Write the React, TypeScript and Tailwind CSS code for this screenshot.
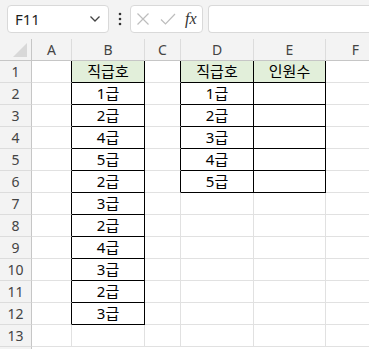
import React from "react";

const cols = ["A", "B", "C", "D", "E", "F"];
const colW = ["w-[40px]", "w-[73px]", "w-[36px]", "w-[73px]", "w-[72px]", "w-[60px]"];

const colB = ["직급호", "1급", "2급", "4급", "5급", "2급", "3급", "2급", "4급", "3급", "2급", "3급"];
const colD = ["직급호", "1급", "2급", "3급", "4급", "5급"];

function cellInfo(row: number, col: number) {
  // row: 1-based, col: 0..5 (A..F)
  let text = "";
  let fill = false;
  let rightBlack = false;
  let bottomBlack = false;
  if (col === 0 && row <= 12) rightBlack = true;
  if (col === 1 && row <= 12) {
    text = colB[row - 1];
    fill = row === 1;
    rightBlack = true;
    bottomBlack = true;
  }
  if (col === 2 && row <= 6) rightBlack = true;
  if (col === 3 && row <= 6) {
    text = colD[row - 1];
    fill = row === 1;
    rightBlack = true;
    bottomBlack = true;
  }
  if (col === 4 && row <= 6) {
    text = row === 1 ? "인원수" : "";
    fill = row === 1;
    rightBlack = true;
    bottomBlack = true;
  }
  return { text, fill, rightBlack, bottomBlack };
}

function Toolbar() {
  return (
    <div className="flex h-[39px] items-start gap-0 bg-[#f3f3f3] pt-[5px] pl-[7px]">
      <div className="flex h-[28px] w-[102px] items-center justify-between rounded-[4px] border border-[#d9d9d9] bg-white pl-[7px] pr-[7px]">
        <span className="text-[15px] text-[#1f1f1f]">F11</span>
        <svg width="12" height="8" viewBox="0 0 12 8">
          <path d="M1.5 1.5 L6 6 L10.5 1.5" fill="none" stroke="#444" strokeWidth="1.3" />
        </svg>
      </div>
      <div className="flex h-[28px] w-[21px] items-center justify-center">
        <svg width="4" height="14" viewBox="0 0 4 14">
          <circle cx="2" cy="2" r="1.3" fill="#333" />
          <circle cx="2" cy="7" r="1.3" fill="#333" />
          <circle cx="2" cy="12" r="1.3" fill="#333" />
        </svg>
      </div>
      <div className="flex h-[28px] w-[73px] items-center rounded-[4px] border border-[#d9d9d9] bg-white pl-[5px]">
        <svg width="14" height="14" viewBox="0 0 14 14" className="mr-[10px]">
          <path d="M1.5 1.5 L12.5 12.5 M12.5 1.5 L1.5 12.5" stroke="#bdbdbd" strokeWidth="1.2" />
        </svg>
        <svg width="16" height="14" viewBox="0 0 16 14" className="mr-[9px]">
          <path d="M1 7.5 L5.5 12 L15 2" fill="none" stroke="#bdbdbd" strokeWidth="1.2" />
        </svg>
        <span className="text-[16px] italic text-[#333]" style={{ fontFamily: '"Liberation Serif", serif' }}>
          fx
        </span>
      </div>
      <div className="ml-[5px] h-[28px] flex-1 rounded-l-[4px] border border-r-0 border-[#d9d9d9] bg-white" />
    </div>
  );
}

function HeaderRow() {
  return (
    <div className="flex h-[22px] bg-[#f3f3f3]">
      <div className="relative h-[22px] w-[32px] shrink-0 border-r border-b border-[#c6c6c6]">
        <svg width="14" height="14" viewBox="0 0 14 14" className="absolute right-[4px] bottom-[3px]">
          <path d="M14 0 L14 14 L0 14 Z" fill="#d8d8d8" />
        </svg>
      </div>
      {cols.map((c, i) => (
        <div
          key={c}
          className={`${colW[i]} flex h-[22px] shrink-0 items-center justify-center border-r border-b border-r-[#dcdcdc] border-b-[#c6c6c6] text-[14px] text-[#444]`}
        >
          {c}
        </div>
      ))}
    </div>
  );
}

function Row({ row }: { row: number }) {
  return (
    <div className="flex h-[22px]">
      <div className="flex h-[22px] w-[32px] shrink-0 items-center justify-center border-r border-b border-r-[#c6c6c6] border-b-[#dcdcdc] bg-[#f3f3f3] text-[14px] text-[#444]">
        {row}
      </div>
      {cols.map((c, i) => {
        const info = cellInfo(row, i);
        return (
          <div
            key={c}
            className={`${colW[i]} flex h-[22px] shrink-0 items-center justify-center border-r border-b text-[15px] text-black ${
              info.rightBlack ? "border-r-black" : "border-r-[#e1e1e1]"
            } ${info.bottomBlack ? "border-b-black" : "border-b-[#e1e1e1]"} ${
              info.fill ? "bg-[#e2efda]" : "bg-white"
            }`}
          >
            {info.text}
          </div>
        );
      })}
    </div>
  );
}

export default function App() {
  const rows = Array.from({ length: 13 }, (_, i) => i + 1);
  return (
    <div
      className="h-[349px] w-[369px] overflow-hidden bg-white"
      style={{ fontFamily: '"Noto Sans", "Noto Sans CJK KR", sans-serif' }}
    >
      <Toolbar />
      <HeaderRow />
      {rows.map((r) => (
        <Row key={r} row={r} />
      ))}
      <div className="flex h-[22px]">
        <div className="h-[22px] w-[32px] shrink-0 border-r border-[#c6c6c6] bg-[#f3f3f3]" />
        <div className="flex-1" />
      </div>
    </div>
  );
}
